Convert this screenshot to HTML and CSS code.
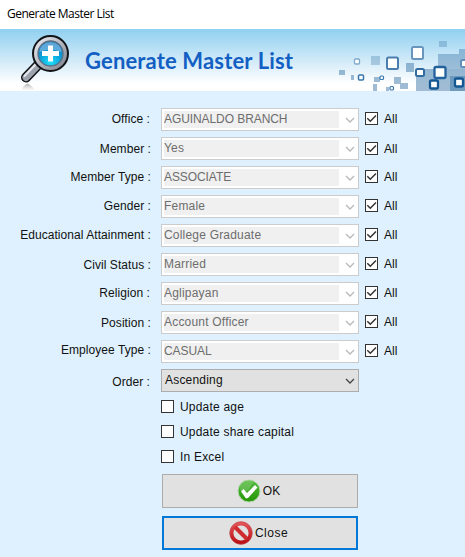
FILE: index.html
```
<!DOCTYPE html>
<html lang="en">
<head>
<meta charset="utf-8">
<title>Generate Master List</title>
<link rel="stylesheet" href="styles.css">
</head>
<body>
<div class="titlebar"><span>Generate Master List</span></div>
<header class="banner">
  <svg class="art" width="465" height="62" viewBox="0 29 465 62" aria-hidden="true">
    <defs>
      <linearGradient id="metal" x1="0" y1="0" x2="1" y2="1"><stop offset="0" stop-color="#f4f5f8"/><stop offset=".5" stop-color="#b4b8c1"/><stop offset="1" stop-color="#747984"/></linearGradient>
      <radialGradient id="lens" cx=".5" cy=".85" r=".8"><stop offset="0" stop-color="#20e0fa"/><stop offset=".5" stop-color="#0ba5dc"/><stop offset="1" stop-color="#1677b8"/></radialGradient>
      <linearGradient id="shade" x1="0" y1="0" x2="0" y2="1"><stop offset="0" stop-color="#888"/><stop offset="1" stop-color="#ddd" stop-opacity=".3"/></linearGradient>
    </defs>
    <path d="M21.500 90q1-4 6-6.500q5 2.500 7 6.500z" fill="url(#shade)" opacity=".7"/>
    <path d="M38.500 64.500L26 77.500" stroke="#101216" stroke-width="10" stroke-linecap="round"/>
    <path d="M38 65L26 77.500" stroke="#9da3ad" stroke-width="7" stroke-linecap="round"/>
    <path d="M36 64L24.500 76" stroke="#e5e8ed" stroke-width="2" stroke-linecap="round"/>
    <circle cx="50.500" cy="53.500" r="17.500" fill="url(#metal)" stroke="#111317" stroke-width="2"/>
    <circle cx="50.500" cy="53.500" r="12.500" fill="url(#lens)" stroke="#5b6e82" stroke-width="1.300"/>
    <path d="M39.500 52a11 10 0 0 1 22 0q-11-5-22 0" fill="#86bce5" opacity=".65"/>
    <path d="M48 45.500h5v5.500h6v5h-6v5.500h-5v-5.500h-6v-5h6z" fill="#fff"/>
    <g fill="#3f79aa" fill-opacity=".5">
      <path d="M439 41h8v6h-8zM371 56h9v9h-9z" opacity=".65"/>
      <path d="M339 70h6v5h-6zM351 75h3v5h-3zM373 84h4v7h-4zM374 77h6v5h-6zM386 87h3v4h-3zM394 77h7v7h-7zM400 83h8v6h-8zM406 63h8v9h-8z"/>
      <path d="M438 54h21v-5h6v20h-27z" opacity=".85"/>
      <path d="M416 69h49v22h-49z"/>
      <path d="M450 76h15v15h-15z"/>
    </g>
    <g fill="#fff">
      <rect x="354.500" y="59" width="5" height="5" rx="1" stroke="#7fa9ca" stroke-width="1.300"/>
      <rect x="358.500" y="75" width="5" height="5" rx="1" stroke="#3978ae" stroke-width="1.500"/>
      <rect x="380" y="76" width="3.500" height="3.500" rx="1" stroke="#3978ae" stroke-width="1.200"/>
      <rect x="390" y="86.500" width="3.500" height="3.500" rx="1" stroke="#3978ae" stroke-width="1.200"/>
      <rect x="387" y="57.500" width="11" height="11.500" rx="1.500" stroke="#4a7eae" stroke-width="2"/>
      <rect x="412" y="47" width="11" height="12" rx="1.500" stroke="#6995bd" stroke-width="2"/>
      <rect x="416" y="69" width="8" height="7" rx="1.500" stroke="#316ca3" stroke-width="2"/>
      <rect x="434.500" y="67" width="11" height="11" rx="1.500" stroke="#22639e" stroke-width="2.300"/>
      <rect x="430" y="80.500" width="8" height="8" rx="1.500" stroke="#155793" stroke-width="2.300"/>
      <rect x="455" y="78.500" width="8" height="8" rx="1.500" stroke="#155793" stroke-width="2.300"/>
      <rect x="461" y="60" width="8" height="7" rx="1.500" stroke="#628fb7" stroke-width="2"/>
    </g>
  </svg>
  <h1>Generate Master List</h1>
</header>
<svg class="defs" width="0" height="0" aria-hidden="true">
  <symbol id="tick" viewBox="0 0 11 11"><path d="M1.300 5.200L4.300 8.200L10 2.500" fill="none" stroke="#333" stroke-width="1.500"/></symbol>
  <symbol id="arrow" viewBox="0 0 10 6"><path d="M1 1L5 5L9 1" fill="none" stroke="currentColor" stroke-width="1.300"/></symbol>
</svg>
<main class="form">
  <div class="row"><label class="n0">Office :</label><div class="combo off"><span class="val caps">AGUINALDO BRANCH</span><svg><use href="#arrow"/></svg></div><div class="check"><i class="box"><svg><use href="#tick"/></svg></i><span>All</span></div></div>
  <div class="row"><label class="n1">Member :</label><div class="combo off"><span class="val">Yes</span><svg><use href="#arrow"/></svg></div><div class="check low"><i class="box"><svg><use href="#tick"/></svg></i><span>All</span></div></div>
  <div class="row"><label>Member Type :</label><div class="combo off"><span class="val caps">ASSOCIATE</span><svg><use href="#arrow"/></svg></div><div class="check"><i class="box"><svg><use href="#tick"/></svg></i><span>All</span></div></div>
  <div class="row"><label>Gender :</label><div class="combo off"><span class="val">Female</span><svg><use href="#arrow"/></svg></div><div class="check"><i class="box"><svg><use href="#tick"/></svg></i><span>All</span></div></div>
  <div class="row"><label>Educational Attainment :</label><div class="combo off"><span class="val">College Graduate</span><svg><use href="#arrow"/></svg></div><div class="check"><i class="box"><svg><use href="#tick"/></svg></i><span>All</span></div></div>
  <div class="row"><label class="n1">Civil Status :</label><div class="combo off"><span class="val">Married</span><svg><use href="#arrow"/></svg></div><div class="check"><i class="box"><svg><use href="#tick"/></svg></i><span>All</span></div></div>
  <div class="row"><label class="n0">Religion :</label><div class="combo off"><span class="val">Aglipayan</span><svg><use href="#arrow"/></svg></div><div class="check"><i class="box"><svg><use href="#tick"/></svg></i><span>All</span></div></div>
  <div class="row"><label class="n1">Position :</label><div class="combo off"><span class="val">Account Officer</span><svg><use href="#arrow"/></svg></div><div class="check"><i class="box"><svg><use href="#tick"/></svg></i><span>All</span></div></div>
  <div class="row"><label class="up">Employee Type :</label><div class="combo off"><span class="val caps">CASUAL</span><svg><use href="#arrow"/></svg></div><div class="check"><i class="box"><svg><use href="#tick"/></svg></i><span>All</span></div></div>
  <div class="row"><label class="n2">Order :</label><div class="combo"><span class="val">Ascending</span><svg><use href="#arrow"/></svg></div></div>
  <div class="options">
    <div class="check"><i class="box"></i><span>Update age</span></div>
    <div class="check"><i class="box"></i><span>Update share capital</span></div>
    <div class="check"><i class="box"></i><span>In Excel</span></div>
  </div>
  <div class="actions">
    <button type="button"><svg width="24" height="24" viewBox="0 0 24 24"><defs><linearGradient id="green" x1="0" y1="0" x2="0" y2="1"><stop offset="0" stop-color="#55bb42"/><stop offset="1" stop-color="#249604"/></linearGradient></defs><circle cx="12" cy="12" r="11" fill="url(#green)" stroke="#b9d7b3"/><path d="M11 12L17 2a11 11 0 0 0-15 6l2 4z" fill="#8bd07c" opacity=".45"/><path d="M4 12.500l2.500-2.500 3.500 4 8-8 2.500 2.500-9.500 10.500-2 .500z" fill="#fff"/></svg><span>OK</span></button>
    <button type="button" class="focus"><svg width="24" height="24" viewBox="0 0 24 24"><defs><linearGradient id="red" x1="0" y1="0" x2="0" y2="1"><stop offset="0" stop-color="#e25358"/><stop offset="1" stop-color="#bd1117"/></linearGradient></defs><circle cx="12" cy="12" r="9.500" fill="none" stroke="url(#red)" stroke-width="3.800"/><path d="M6 6l12 12" stroke="#cf2c30" stroke-width="4"/><circle cx="12" cy="12" r="11.300" fill="none" stroke="#b64e4e" stroke-width=".5"/></svg><span>Close</span></button>
  </div>
</main>
</body>
</html>
```
FILE: styles.css
```
* { box-sizing: border-box; }
body { margin: 0; width: 465px; height: 557px; overflow: hidden; background: #dff1fe; color: #111; font: 12px/15px "Liberation Sans", Arial, sans-serif; }
.titlebar { height: 29px; padding: 5px 7px; background: #fff; color: #000; font: 12px/17px "Open Sans", sans-serif; letter-spacing: -0.5px; }
.banner { position: relative; height: 62px; background: linear-gradient(#90d0f0, #dff0fa 62%, #fff 88%); }
.art { position: absolute; left: 0; top: 0; }
h1 { margin: 0; padding: 16px 0 0 85px; font: bold 22px/32px Lato, sans-serif; letter-spacing: .15px; color: #135fc3; position: relative; white-space: nowrap; }
.defs { position: absolute; }
.form { padding-top: 17px; }
.row { display: grid; grid-template-columns: 151px 198px 1fr; column-gap: 10px; height: 29px; }
.row > .check { margin-left: -4px; }
label { text-align: right; height: 15px; margin-top: 4px; white-space: nowrap; letter-spacing: .06px; }
label.n0 { padding-right: 1px; }
label.n1 { margin-top: 5px; }
label.up { margin-top: 3px; }
label.n2 { margin-top: 6px; padding-right: 1px; }
.combo { position: relative; height: 23px; border: 1px solid #adadad; background: #e1e1e1; padding: 3px; letter-spacing: .2px; }
.combo .val { display: block; white-space: nowrap; }
.combo.off { border-color: #ccc; background: #fff; color: #6d6d6d; padding: 2px 19px 2px 2px; }
.combo.off .val { background: #f0f0f0; height: 17px; line-height: 17px; }
.combo .caps { letter-spacing: -.08px; }
.combo svg { position: absolute; right: 3px; top: 8px; width: 10px; height: 6px; color: #444; }
.combo.off svg { color: #b8b8b8; }
.check { display: flex; gap: 6px; height: 13px; margin-top: 4px; line-height: 15px; white-space: nowrap; }
.check.low { margin-top: 5px; }
.box { width: 13px; height: 13px; border: 1px solid #333; background: #fff; flex: none; }
.box svg { display: block; width: 11px; height: 11px; }
.options { padding: 2px 0 0 161px; letter-spacing: .2px; }
.options .check { margin: 0 0 12px; }
.actions { display: grid; gap: 8px; width: 196px; margin: -1px 0 0 162px; }
button { display: flex; align-items: center; justify-content: center; gap: 2px; height: 34px; padding: 0 3px 0 0; border: 1px solid #adadad; background: #e1e1e1; color: #111; font: 12px/15px "Liberation Sans", Arial, sans-serif; letter-spacing: 0; }
button.focus { border: 2px solid #0078d7; letter-spacing: .5px; }
```
